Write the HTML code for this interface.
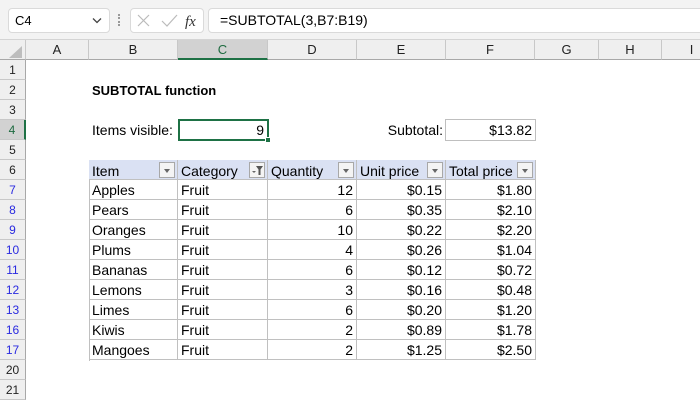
<!DOCTYPE html>
<html><head><meta charset="utf-8"><style>
*{margin:0;padding:0;box-sizing:border-box}
body{width:700px;height:400px;overflow:hidden;background:#fff;font-family:"Liberation Sans",sans-serif;font-size:14px;color:#000;position:relative}
.a{position:absolute}
.top{left:0;top:0;width:700px;height:40px;background:#f3f3f3;border-bottom:1px solid #d4d4d4}
.box{background:#fff;border:1px solid #dadada;border-radius:4px;font-size:13px}
.ch{top:40px;height:20px;background:#efefef;border-right:1px solid #c8c8c8;border-bottom:1px solid #a8a8a8;text-align:center;line-height:19px;color:#222;font-size:13px}
.rh{left:0;width:26px;height:20px;background:#efefef;border-right:1px solid #a8a8a8;border-bottom:1px solid #c8c8c8;text-align:center;line-height:20px;color:#222;font-size:12px}
.rh.b{color:#2a2ae0}
.c{height:20px;line-height:21px;padding:0 3px;white-space:nowrap}
.r{text-align:right}
.t{border-right:1px solid #c0c0c0;border-bottom:1px solid #c0c0c0}
.hd{background:#dae1f3}
.dd{width:16px;height:16px;border:1px solid #a8a8a8;background:#f4f4f4;top:2px}
.dd:after{content:"";position:absolute;left:4px;top:6px;border-left:3.5px solid transparent;border-right:3.5px solid transparent;border-top:4px solid #666}
.ff:after{display:none}
</style></head><body>
<div class="a top"></div>
<div class="a box" style="left:8px;top:8px;width:102px;height:25px;line-height:23px;padding-left:6px">C4</div>
<svg class="a" style="left:92px;top:17px" width="10" height="8"><path d="M1 1.5L5 5.5L9 1.5" fill="none" stroke="#444" stroke-width="1.3"/></svg>
<div class="a" style="left:118px;top:14px;width:3px;height:12px;border-left:2px dotted #999"></div>
<div class="a box" style="left:130px;top:8px;width:74px;height:25px"></div>
<svg class="a" style="left:136px;top:13px" width="70" height="16"><path d="M2 2L13 13M13 2L2 13" stroke="#bbb" stroke-width="1.2"/><path d="M26 8L31 13L41 2" fill="none" stroke="#bbb" stroke-width="1.2"/><text x="49" y="13" font-family="Liberation Serif" font-style="italic" font-size="15" fill="#333">fx</text></svg>
<div class="a box" style="left:208px;top:8px;width:500px;height:25px;line-height:23px;padding-left:11px;font-size:14px">=SUBTOTAL(3,B7:B19)</div>

<div class="a ch" style="left:0;width:26px"></div>
<svg class="a" style="left:9px;top:46px" width="14" height="12"><path d="M13 0L13 12L0 12Z" fill="#bdbdbd"/></svg>
<div class="a ch" style="left:26px;width:63px">A</div>
<div class="a ch" style="left:89px;width:89px">B</div>
<div class="a ch" style="left:178px;width:90px;background:#d2d2d2;border-bottom:2px solid #1e7145;color:#1e6b40">C</div>
<div class="a ch" style="left:268px;width:89px">D</div>
<div class="a ch" style="left:357px;width:89px">E</div>
<div class="a ch" style="left:446px;width:89px">F</div>
<div class="a ch" style="left:535px;width:64px">G</div>
<div class="a ch" style="left:599px;width:63px">H</div>
<div class="a ch" style="left:662px;width:60px">I</div>

<div class="a rh" style="top:60px">1</div>
<div class="a rh" style="top:80px">2</div>
<div class="a rh" style="top:100px">3</div>
<div class="a rh" style="top:120px;background:#d2d2d2;border-right:2px solid #1e7145;color:#1e6b40">4</div>
<div class="a rh" style="top:140px">5</div>
<div class="a rh" style="top:160px">6</div>
<div class="a rh b" style="top:180px">7</div>
<div class="a rh b" style="top:200px">8</div>
<div class="a rh b" style="top:220px">9</div>
<div class="a rh b" style="top:240px">10</div>
<div class="a rh b" style="top:260px">11</div>
<div class="a rh b" style="top:280px">12</div>
<div class="a rh b" style="top:300px">13</div>
<div class="a rh b" style="top:320px">16</div>
<div class="a rh b" style="top:340px">17</div>
<div class="a rh" style="top:360px">20</div>
<div class="a rh" style="top:380px">21</div>

<div class="a c" style="left:89px;top:80px;font-weight:bold;font-size:13px">SUBTOTAL function</div>
<div class="a c" style="left:89px;top:120px">Items visible:</div>
<div class="a c r" style="left:178px;top:119px;width:91px;height:22px;border:2px solid #1e7145;line-height:19px">9</div>
<div class="a" style="left:265px;top:137px;width:6px;height:6px;background:#1e7145;border:1px solid #fff"></div>
<div class="a c r" style="left:357px;top:120px;width:89px">Subtotal:</div>
<div class="a c r" style="left:445px;top:119px;width:91px;height:22px;border:1px solid #bfbfbf;line-height:21px">$13.82</div>

<div class="a" style="left:89px;top:160px;width:447px;height:201px;border-left:1px solid #c0c0c0;border-top:1px solid #c0c0c0"></div>
<div id="tb"></div>
<script>
var cols=[[89,89],[178,90],[268,89],[357,89],[446,90]];
var hd=["Item","Category","Quantity","Unit price","Total price"];
var d=[["Apples","Fruit","12","$0.15","$1.80"],["Pears","Fruit","6","$0.35","$2.10"],["Oranges","Fruit","10","$0.22","$2.20"],["Plums","Fruit","4","$0.26","$1.04"],["Bananas","Fruit","6","$0.12","$0.72"],["Lemons","Fruit","3","$0.16","$0.48"],["Limes","Fruit","6","$0.20","$1.20"],["Kiwis","Fruit","2","$0.89","$1.78"],["Mangoes","Fruit","2","$1.25","$2.50"]];
var h="";
for(var j=0;j<5;j++){var x=cols[j][0],w=cols[j][1];
var dd=j==1?'<div class="a dd ff" style="left:'+(w-19)+'px"><svg width="14" height="14" style="position:absolute;left:0;top:0"><path d="M2 8L4 10L6 8Z" fill="#666"/><path d="M6 3H13L10.5 6.5V12H8.5V6.5Z" fill="#555"/></svg></div>':'<div class="a dd" style="left:'+(w-19)+'px"></div>';
h+='<div class="a c t hd" style="left:'+x+'px;top:160px;width:'+w+'px;padding-top:1px">'+hd[j]+dd+'</div>';
for(var i=0;i<9;i++){h+='<div class="a c t'+(j>1?' r':'')+'" style="left:'+x+'px;top:'+(180+20*i)+'px;width:'+w+'px">'+d[i][j]+'</div>';}}
document.getElementById("tb").outerHTML=h;
</script>
</body></html>
